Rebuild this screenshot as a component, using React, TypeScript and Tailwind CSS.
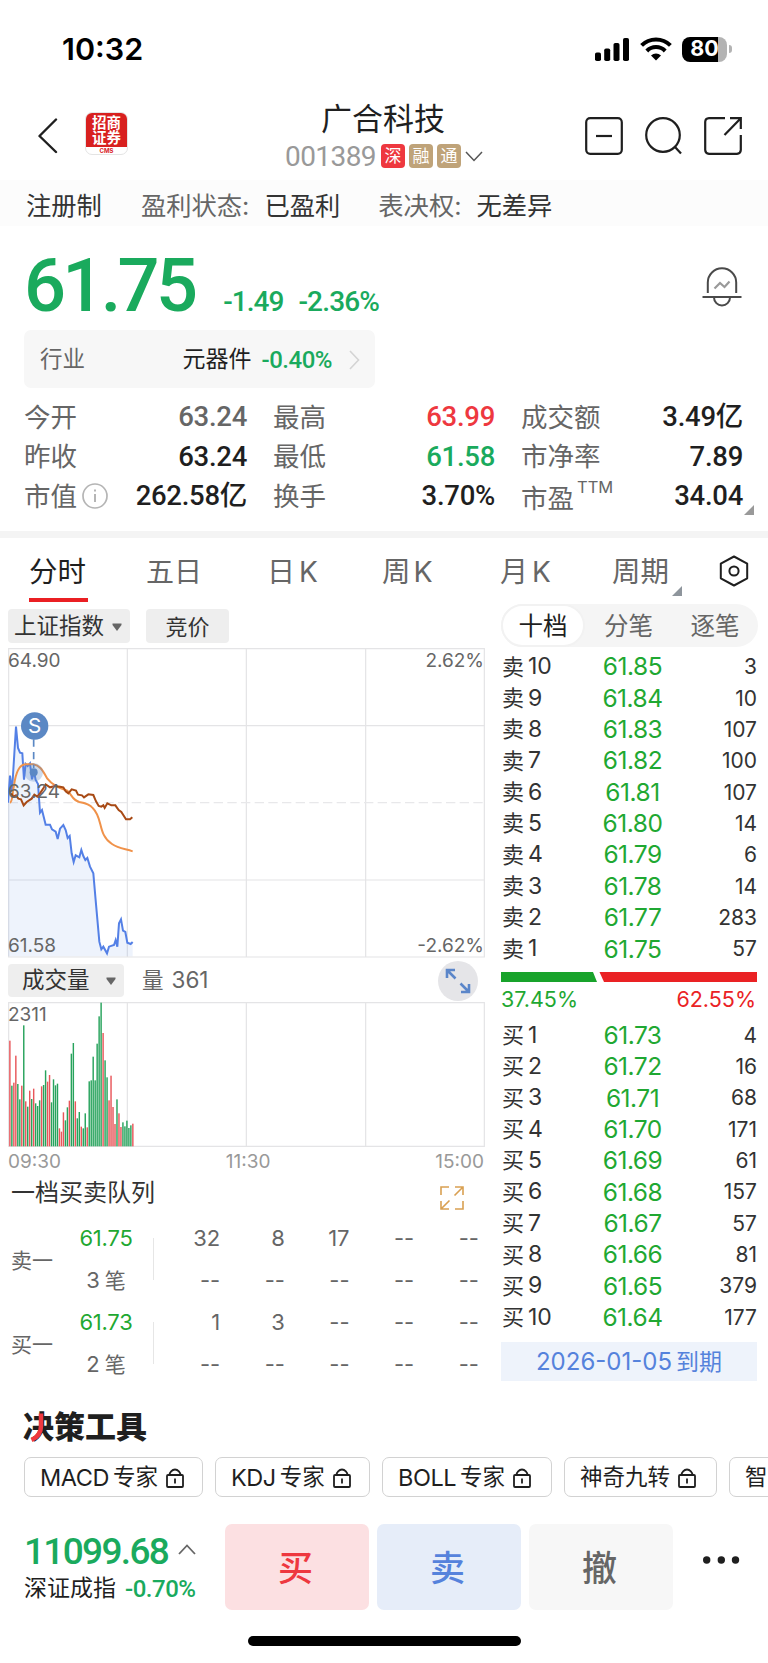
import React from "react";

const DIN = "font-['Roboto','Noto_Sans_CJK_SC',sans-serif]";

interface Level {
  label: string;
  price: string;
  volume: number;
}

const asks: Level[] = [
  { label: "10", price: "61.85", volume: 3 },
  { label: "9", price: "61.84", volume: 10 },
  { label: "8", price: "61.83", volume: 107 },
  { label: "7", price: "61.82", volume: 100 },
  { label: "6", price: "61.81", volume: 107 },
  { label: "5", price: "61.80", volume: 14 },
  { label: "4", price: "61.79", volume: 6 },
  { label: "3", price: "61.78", volume: 14 },
  { label: "2", price: "61.77", volume: 283 },
  { label: "1", price: "61.75", volume: 57 },
];

const bids: Level[] = [
  { label: "1", price: "61.73", volume: 4 },
  { label: "2", price: "61.72", volume: 16 },
  { label: "3", price: "61.71", volume: 68 },
  { label: "4", price: "61.70", volume: 171 },
  { label: "5", price: "61.69", volume: 61 },
  { label: "6", price: "61.68", volume: 157 },
  { label: "7", price: "61.67", volume: 57 },
  { label: "8", price: "61.66", volume: 81 },
  { label: "9", price: "61.65", volume: 379 },
  { label: "10", price: "61.64", volume: 177 },
];

// One entry per minute: bar height, r = up, g = down
const volumeBars =
  "317r 182g 191r 272r 187g 141g 182r 363g 135r 119g 167r 142g 173r 129g 121g 138g 180r 184g 228g 194r 214r 132g 201g 183g 188g 54r 44r 102r 78g 117g 137r 278g 310g 135r 84g 103g 59r 54g 99g 57r 195g 198g 269g 198g 308g 390g 431g 340r 258g 207g 138r 212r 118r 67r 141g 99r 58r 72g 60g 77g 55g 63g 68r"
    .split(" ")
    .map((bar) => ({ height: parseInt(bar, 10), up: bar.endsWith("r") }));

const priceLine =
  "0,464 6,383 12,430 24,236 30,300 36,314 43,316 48,395 53,348 59,354 66,346 72,394 78,371 83,396 90,408 96,494 102,486 113,530 126,530 132,544 143,551 149,573 156,542 166,531 173,546 179,570 185,564 191,616 197,642 203,622 214,628 220,606 226,624 232,636 238,630 246,656 256,676 262,746 274,881 280,904 286,896 297,916 303,896 318,891 323,876 328,896 333,826 339,814 345,848 352,852 358,884 368,888 374,882";

const indexLine =
  "10,436 16,446 24,442 31,452 39,454 47,472 56,462 71,452 79,440 88,446 96,436 106,421 113,409 126,418 141,414 156,416 166,418 173,430 181,436 191,424 204,428 210,440 222,442 228,448 241,439 256,441 264,460 272,474 280,476 286,472 290,480 298,466 310,472 322,472 332,486 340,492 354,514 366,514 373,508";

const StatusBar: React.FC = () => (
  <div className="flex h-[98px] items-center justify-between pl-[62px] pr-[36px] text-black">
    <span className="text-[30.5px] font-semibold leading-none">10:32</span>
    <div className="flex items-center">
      <svg width="34" height="23" viewBox="0 0 34 23">
        <rect x="0" y="14.5" width="6" height="8.5" rx="1.8" />
        <rect x="9.2" y="10.5" width="6" height="12.5" rx="1.8" />
        <rect x="18.5" y="5" width="6" height="18" rx="1.8" />
        <rect x="28" y="0" width="6" height="23" rx="1.8" />
      </svg>
      <svg
        width="32"
        height="24"
        viewBox="0 0 32 24"
        className="ml-[11px]"
        fill="none"
        stroke="#000"
        strokeWidth="4"
      >
        <path d="M1.6 8.4A20.3 20.3 0 0 1 30.4 8.4" />
        <path d="M6.8 14A12.8 12.8 0 0 1 25.2 14" />
        <path d="M16 23.6L11 18.4A7.2 7.2 0 0 1 21 18.4Z" fill="#000" stroke="none" />
      </svg>
      <div className="ml-[10px] flex h-[25px] w-[45px] items-center justify-center rounded-[8px] bg-[linear-gradient(to_right,#000_80%,#b3b3b3_80%)] text-[21.5px] font-bold leading-none text-white">
        80
      </div>
      <div className="ml-[2px] h-[8px] w-[3px] rounded-r-full bg-[#b3b3b3]" />
    </div>
  </div>
);

const Header: React.FC = () => (
  <div className="grid h-[82px] grid-cols-[1fr_auto_1fr] items-start">
    <div className="flex pl-[37px] pt-[14px]">
      <svg
        width="22"
        height="36"
        viewBox="0 0 22 36"
        className="mt-[6px]"
        fill="none"
        stroke="#1f1f1f"
        strokeWidth="2.4"
        strokeLinecap="round"
        strokeLinejoin="round"
      >
        <path d="M19 1.5L2.5 18L19 34" />
      </svg>
      <div className="ml-[26px] flex h-[43px] w-[43px] flex-col overflow-hidden rounded-[7px] border border-[#e4e4e4] bg-white">
        <div className="flex h-[34px] shrink-0 flex-col items-center justify-center bg-[#d8201f] text-[14.5px] font-bold leading-[15.5px] text-white">
          <span className="h-[15.5px]">招商</span>
          <span className="h-[15.5px]">证券</span>
        </div>
        <div className="text-center text-[6px] font-bold leading-[7px] text-[#d8201f]">
          CMS
        </div>
      </div>
    </div>
    <div className="flex flex-col items-center">
      <h1 className="mr-[2px] mt-[3px] text-[31px] leading-[36px] text-[#1f1f1f]">
        广合科技
      </h1>
      <div className="mt-[7px] flex h-[24px] items-center gap-1">
        <span
          className={`${DIN} mr-px mt-px text-[28px] leading-none tracking-[-0.02em] text-[#999]`}
        >
          001389
        </span>
        <Tag text="深" color="bg-[#ee383f]" />
        <Tag text="融" color="bg-[#bfa379]" />
        <Tag text="通" color="bg-[#bfa379]" />
        <svg width="18" height="11" viewBox="0 0 18 11" fill="none" stroke="#555" strokeWidth="1.5">
          <path d="M1 1L9 9.5L17 1" />
        </svg>
      </div>
    </div>
    <div className="flex justify-end gap-[22px] pr-[26px] pt-[19px]">
      <svg width="38" height="38" viewBox="0 0 38 38" fill="none" stroke="#1f1f1f" strokeWidth="2.2">
        <rect x="1.2" y="1.2" width="35.6" height="35.6" rx="4" />
        <path d="M11 19H27" />
      </svg>
      <svg width="37" height="38" viewBox="0 0 37 38" fill="none" stroke="#1f1f1f" strokeWidth="2.2">
        <circle cx="18" cy="18" r="16.8" />
        <path d="M30 30L36 36.5" />
      </svg>
      <svg width="38" height="38" viewBox="0 0 38 38" fill="none" stroke="#1f1f1f" strokeWidth="2.2">
        <path d="M21 1.2H5A4 4 0 0 0 1.2 5V33A4 4 0 0 0 5 36.8H33A4 4 0 0 0 36.8 33V18" />
        <path d="M26 1.2H36.8V12M36.8 1.2L20.5 18" />
      </svg>
    </div>
  </div>
);

const Tag: React.FC<{ text: string; color: string }> = ({ text, color }) => (
  <span
    className={`${color} flex h-[24px] w-[24px] items-center justify-center rounded-[4px] text-[17px] leading-none text-white`}
  >
    {text}
  </span>
);

const Stat: React.FC<{
  label: React.ReactNode;
  value: string;
  color?: string;
}> = ({ label, value, color = "text-[#1f1f1f]" }) => (
  <div className="flex h-[39.5px] items-center justify-between">
    <span className="flex items-center text-[26.5px] leading-none text-[#666]">
      {label}
    </span>
    <span className={`${DIN} ${color} text-[27.5px] font-medium leading-none tracking-[-0.01em]`}>
      {value}
    </span>
  </div>
);

const Quote: React.FC = () => (
  <>
    <div className="flex h-[46px] items-center bg-[#fcfcfc] pl-[26px] pt-[5px] text-[25.3px] leading-none text-[#333]">
      <span>注册制</span>
      <span className="ml-[39px] text-[#666]">盈利状态:</span>
      <span className="ml-[15px]">已盈利</span>
      <span className="ml-[38px] text-[#666]">表决权:</span>
      <span className="ml-[15px]">无差异</span>
    </div>
    <div className="flex h-[104px] justify-between pl-[24px] pr-[26px]">
      <div className={`${DIN} flex items-baseline pt-[23px] text-[#1aaa5d]`}>
        <span className="text-[74px] font-medium leading-none tracking-[-0.05em]">
          61.75
        </span>
        <span className="ml-[29px] text-[28px] font-medium leading-none tracking-[-0.035em]">
          -1.49
        </span>
        <span className="ml-[15px] text-[28px] font-medium leading-none tracking-[-0.03em]">
          -2.36%
        </span>
      </div>
      <svg
        width="40"
        height="42"
        viewBox="0 0 40 42"
        className="mt-[40px]"
        fill="none"
        stroke="#4a4a4a"
        strokeWidth="2"
      >
        <path d="M5.8 27V16.5A14.2 14.2 0 0 1 34.2 16.5V27" />
        <path d="M0.5 31H39.5" />
        <path d="M12 31.5A8 8 0 0 0 28 31.5" />
        <path d="M12.5 22.5L18 17L22.5 21L27.5 15.5" stroke="#999" strokeWidth="2.2" />
      </svg>
    </div>
    <div className="ml-[24px] flex h-[58px] w-[351px] items-center rounded-[7px] bg-[#f7f7f7] pl-[16px] pr-[15px] pt-px">
      <span className="text-[22.5px] leading-none text-[#666]">行业</span>
      <span className="ml-auto text-[23px] leading-none text-[#1f1f1f]">
        元器件
      </span>
      <span
        className={`${DIN} ml-[10px] text-[24px] font-medium leading-none tracking-[-0.02em] text-[#1aaa5d]`}
      >
        -0.40%
      </span>
      <svg width="11" height="20" viewBox="0 0 11 20" className="ml-[17px]" fill="none" stroke="#d4d4d4" strokeWidth="1.6">
        <path d="M1 1L9.5 10L1 19" />
      </svg>
    </div>
    <div className="relative grid h-[143px] grid-cols-[223px_222px_222px] content-start gap-x-[26px] pl-[24px] pt-[9px]">
      <Stat label="今开" value="63.24" color="text-[#666]" />
      <Stat label="最高" value="63.99" color="text-[#ee383f]" />
      <Stat label="成交额" value="3.49亿" />
      <Stat label="昨收" value="63.24" />
      <Stat label="最低" value="61.58" color="text-[#1aaa5d]" />
      <Stat label="市净率" value="7.89" />
      <Stat
        label={
          <>
            市值
            <svg width="26" height="26" viewBox="0 0 26 26" className="ml-[5px]" fill="none" stroke="#b5b5b5" strokeWidth="1.7">
              <circle cx="13" cy="13" r="12" />
              <path d="M13 11V19M13 6.5V8.5" strokeWidth="2" />
            </svg>
          </>
        }
        value="262.58亿"
      />
      <Stat label="换手" value="3.70%" />
      <Stat
        label={
          <>
            <span className="mt-[4px]">市盈</span>
            <span className="mb-[18px] ml-[3px] text-[16.5px] leading-none">TTM</span>
          </>
        }
        value="34.04"
      />
      <svg width="10" height="10" viewBox="0 0 10 10" className="absolute right-[14px] bottom-[16px]">
        <path d="M10 0V10H0Z" fill="#999" />
      </svg>
    </div>
  </>
);

const Tabs: React.FC = () => (
  <div className="flex h-[66px] items-start pl-[29px] pt-[16px] text-[28.5px] leading-[36px] text-[#666]">
    <div className="w-[117px]">
      <span className="text-[#1f1f1f]">分时</span>
      <div className="mt-[8px] h-[4px] w-[59px] bg-[#ea1f23]" />
    </div>
    <span className="w-[121px] text-[28px]">五日</span>
    <span className="w-[115px] text-[28px]">
      日<span className="ml-[4px]">K</span>
    </span>
    <span className="w-[118px]">
      周<span className="ml-[3px]">K</span>
    </span>
    <span className="w-[112px] text-[28px]">
      月<span className="ml-[4px]">K</span>
    </span>
    <span>周期</span>
    <svg width="10" height="10" viewBox="0 0 10 10" className="ml-[3px] mt-[32px]">
      <path d="M10 0V10H0Z" fill="#8e959c" />
    </svg>
    <svg width="30" height="32" viewBox="0 0 30 32" className="ml-[37px] mt-[1px]" fill="none" stroke="#1f1f1f" strokeWidth="2">
      <path d="M15 1.5L28.2 8.7V23.3L15 30.5L1.8 23.3V8.7Z" strokeLinejoin="round" />
      <circle cx="15" cy="16" r="4.6" />
    </svg>
  </div>
);

const Caret: React.FC = () => (
  <svg width="10" height="8" viewBox="0 0 10 8">
    <path d="M0.5 0.5H9.5V2L5 8L0.5 2Z" fill="#666" />
  </svg>
);

const PriceChart: React.FC = () => (
  <div className="relative mt-[5px] h-[310px] text-[19px] leading-none text-[#666]">
    <svg width="477" height="310" viewBox="0 0 1431 930">
      <g fill="none" stroke="#e4e4e6" strokeWidth="3.6">
        <path d="M2 2H1429V927H2Z" />
        <path d="M2 233H1429M2 696H1429M358 2V927M715 2V927M1073 2V927" />
        <path d="M2 464H1429" strokeDasharray="28 13" stroke="#e8e8ea" />
      </g>
      <polygon points={`0,925 ${priceLine} 374,925`} fill="#5b86e5" fillOpacity="0.1" />
      <polyline points={priceLine} fill="none" stroke="#5480e6" strokeWidth="6" />
      <path
        d="M6 464C14 462 12 440 18 412C24 370 36 350 52 349H76C98 352 106 372 118 392C132 410 150 420 178 428C192 440 192 456 214 462C236 466 246 470 254 480C286 510 268 560 312 588C332 602 350 602 374 610"
        fill="none"
        stroke="#f0924a"
        strokeWidth="6"
      />
      <polyline points={indexLine} fill="none" stroke="#a84a15" strokeWidth="6" />
      <path d="M77 274V360" stroke="#5b88c4" strokeWidth="5" strokeDasharray="22 16" />
      <circle cx="77" cy="373" r="28" fill="#5b88c4" fillOpacity="0.3" />
      <circle cx="77" cy="373" r="12" fill="#5b88c4" />
      <circle cx="80" cy="234" r="41" fill="#5b88c4" />
      <text x="80" y="256" textAnchor="middle" fontSize="62" fill="#fff">
        S
      </text>
    </svg>
    <span className="absolute left-0 top-[3px]">64.90</span>
    <span className="absolute left-0 top-[134px]">63.24</span>
    <span className="absolute left-0 top-[288px]">61.58</span>
    <span className="absolute right-[1px] top-[3px]">2.62%</span>
    <span className="absolute right-[1px] top-[288px]">-2.62%</span>
  </div>
);

const VolumeChart: React.FC = () => (
  <div className="relative mt-[5px] h-[146px]">
    <svg width="477" height="146" viewBox="0 0 1431 438">
      <g fill="none" stroke="#e4e4e6" strokeWidth="3.6">
        <path d="M2 2H1429V433H2Z" />
        <path d="M358 2V433M715 2V433M1073 2V433" />
      </g>
      {volumeBars.map((bar, idx) => (
        <rect
          key={idx}
          x={3.5 + idx * 5.95}
          y={433 - bar.height}
          width="4.3"
          height={bar.height}
          fill={bar.up ? "#e8565a" : "#27a35c"}
        />
      ))}
    </svg>
    <span className="absolute left-0 top-[3px] text-[19px] leading-none text-[#666]">
      2311
    </span>
  </div>
);

const QueueRow: React.FC<{ cells: string[] }> = ({ cells }) => (
  <div className="flex h-[42px] items-center">
    {cells.map((cell, idx) => (
      <span key={idx} className="w-[64.7px] text-right">
        {cell}
      </span>
    ))}
  </div>
);

const Queue: React.FC<{
  side: string;
  price: string;
  count: number;
  cells: string[];
}> = ({ side, price, count, cells }) => (
  <div className="flex h-[84px] items-center text-[22px] leading-none text-[#666]">
    <span className="w-[58px] pl-[3px] pt-[2px] text-[21px]">{side}</span>
    <div className="flex w-[80px] flex-col items-center">
      <span className="flex h-[42px] items-center tracking-[-0.01em] text-[#1fa832]">
        {price}
      </span>
      <span className="flex h-[42px] items-center">
        {count}
        <span className="ml-[5px] text-[21px]">笔</span>
      </span>
    </div>
    <div className="ml-[7px] h-[42px] w-px bg-[#e6e6e6]" />
    <div className="ml-[1.5px]">
      <QueueRow cells={cells} />
      <QueueRow cells={["--", "--", "--", "--", "--"]} />
    </div>
  </div>
);

const ChartColumn: React.FC = () => (
  <div className="w-[477px] pt-[5px]">
    <div className="flex gap-4 text-[22.5px] leading-none text-[#333]">
      <div className="flex h-[34px] w-[122px] items-center justify-between rounded-[4px] bg-[#eee] pl-[6px] pr-[8px] pt-px">
        上证指数
        <Caret />
      </div>
      <div className="flex h-[34px] w-[83px] items-center justify-center rounded-[4px] bg-[#eee] pt-px text-[22px]">
        竞价
      </div>
    </div>
    <PriceChart />
    <div className="mt-[6px] flex h-[33px] items-center">
      <div className="flex h-[33px] w-[116px] items-center justify-between rounded-[4px] bg-[#eee] pl-[14px] pr-[8px] text-[22.5px] leading-none text-[#333]">
        成交量
        <Caret />
      </div>
      <span className="ml-[18px] text-[21.5px] leading-none text-[#666]">
        量<span className="ml-[8px] text-[22.5px]">361</span>
      </span>
      <div className="ml-auto mr-[7px] flex h-[40px] w-[40px] items-center justify-center rounded-full bg-[#e5e5e8]">
        <svg width="26" height="26" viewBox="0 0 26 26" fill="none" stroke="#5b86c9" strokeWidth="2.6">
          <path d="M2 10V2H10M2 2L10.5 10.5M24 16V24H16M24 24L15.5 15.5" />
        </svg>
      </div>
    </div>
    <VolumeChart />
    <div className="mt-[2px] flex h-[22px] items-center justify-between pr-px text-[19px] leading-none text-[#999]">
      <span>09:30</span>
      <span>11:30</span>
      <span>15:00</span>
    </div>
    <div className="flex h-[45px] items-center justify-between pl-[3px] pr-[21px]">
      <span className="mb-[3px] text-[24px] leading-none text-[#333]">
        一档买卖队列
      </span>
      <svg width="24" height="24" viewBox="0 0 24 24" className="mt-[6px]" fill="none" stroke="#d9a052" strokeWidth="1.6">
        <path d="M1 9V1H9M15 1H23V9M23 15V23H15M9 23H1V15M14.5 9.5L23 1M1 23L9.5 14.5" />
      </svg>
    </div>
    <Queue side="卖一" price="61.75" count={3} cells={["32", "8", "17", "--", "--"]} />
    <Queue side="买一" price="61.73" count={2} cells={["1", "3", "--", "--", "--"]} />
  </div>
);

const BookRow: React.FC<{ side: string; level: Level }> = ({ side, level }) => (
  <div className="grid h-[31.35px] grid-cols-[84px_92px_1fr] items-center text-[#333]">
    <span className="flex items-center text-[23px] leading-none">
      <span className="mr-[4px] text-[22px]">{side}</span>
      {level.label}
    </span>
    <span className="pl-px text-center text-[24.5px] leading-none tracking-[-0.02em] text-[#1fa832]">
      {level.price}
    </span>
    <span className="text-right text-[21px] leading-none">{level.volume}</span>
  </div>
);

const OrderBook: React.FC = () => (
  <div className="ml-[16px] w-[257px]">
    <div className="flex h-[43px] items-center rounded-full bg-[#f5f5f5] text-[24.5px] leading-none text-[#666]">
      <span className="flex h-[43px] w-[84px] items-center justify-center rounded-full border-2 border-[#f2f2f2] bg-white pt-px text-[#1f1f1f]">
        十档
      </span>
      <span className="w-[87px] pt-px text-center">分笔</span>
      <span className="w-[86px] pt-px text-center">逐笔</span>
    </div>
    <div className="pr-px pl-px pt-[4px]">
      {asks.map((level) => (
        <BookRow key={level.label} side="卖" level={level} />
      ))}
    </div>
    <svg width="256" height="10" viewBox="0 0 256 10" className="mt-[8px]">
      <path d="M0 0H92L96 10H0Z" fill="#18a32b" />
      <path d="M98.5 0H256V10H103Z" fill="#ea2224" />
    </svg>
    <div className="flex h-[34px] items-center justify-between pr-[2px] text-[21.5px] leading-none">
      <span className="text-[#1fa832]">37.45%</span>
      <span className="text-[#ea2224]">62.55%</span>
    </div>
    <div className="pr-px pl-px pt-[3px]">
      {bids.map((level) => (
        <BookRow key={level.label} side="买" level={level} />
      ))}
    </div>
    <div className="mt-[9px] flex h-[39px] w-[256px] items-center justify-center bg-[#eef3fb] pt-[2px] text-[24px] leading-none text-[#5582dc]">
      2026-01-05
      <span className="ml-[4px] text-[23px]">到期</span>
    </div>
  </div>
);

const LockIcon: React.FC = () => (
  <svg width="18" height="20" viewBox="0 0 18 20" fill="none" stroke="#1f1f1f" strokeWidth="1.8">
    <rect x="1" y="7" width="16" height="12" rx="1" />
    <path d="M3.5 7C3.5 4.5 6 1.5 9 1.5S14.5 4.5 14.5 7M9 10.5V15.5" />
  </svg>
);

const Chip: React.FC<{ latin?: string; text: string; width: string }> = ({
  latin,
  text,
  width,
}) => (
  <div
    className={`${width} flex h-[40px] shrink-0 items-center rounded-[7px] border border-[#d2d2d2] pl-[15px] pt-px text-[23px] leading-none text-[#1f1f1f]`}
  >
    {latin && (
      <span className="mr-[4px] text-[23.5px] tracking-[-0.02em]">{latin}</span>
    )}
    <span className="mr-[8px] shrink-0 text-[22.5px]">{text}</span>
    <LockIcon />
  </div>
);

const Tools: React.FC = () => (
  <div className="h-[129px] overflow-hidden pl-[23px] pt-[16px]">
    <div className="relative h-[32px] w-[130px]">
      <h2 className="text-[31px] font-black leading-[32px] text-[#1f1f1f]">
        决策工具
      </h2>
      <svg width="24" height="32" viewBox="0 0 24 32" className="absolute left-[5px] top-0" fill="none" stroke="#ee383f" strokeWidth="4.5">
        <path d="M13 2.5V15C13 22 9.500 26.500 3.500 29" />
      </svg>
    </div>
    <div className="ml-px mt-[14px] flex gap-[12px]">
      <Chip latin="MACD" text="专家" width="w-[179px]" />
      <Chip latin="KDJ" text="专家" width="w-[155px]" />
      <Chip latin="BOLL" text="专家" width="w-[170px]" />
      <Chip text="神奇九转" width="w-[153px]" />
      <Chip text="智能诊股" width="w-[153px]" />
    </div>
  </div>
);

const Footer: React.FC = () => (
  <>
    <div className="flex h-[86px] pl-[24px]">
      <div className="w-[201px] pt-[8px]">
        <div className={`${DIN} flex h-[38px] items-center text-[#1aaa5d]`}>
          <span className="text-[37px] font-medium leading-none tracking-[-0.045em]">
            11099.68
          </span>
          <svg width="18" height="11" viewBox="0 0 18 11" className="mb-[4px] ml-[10px]" fill="none" stroke="#666" strokeWidth="1.8">
            <path d="M1 10L9 1.5L17 10" />
          </svg>
        </div>
        <div className="flex h-[36px] items-center pt-px text-[23px] leading-none text-[#1f1f1f]">
          深证成指
          <span
            className={`${DIN} ml-[9px] text-[24px] font-medium tracking-[-0.02em] text-[#1aaa5d]`}
          >
            -0.70%
          </span>
        </div>
      </div>
      <div className="flex gap-2 text-[35px] font-medium leading-none">
        <button className="w-[144px] rounded-[7px] bg-[#fce0e2] pr-[3px] pt-[3px] text-[#ee383f]">
          买
        </button>
        <button className="w-[144px] rounded-[7px] bg-[#e6edf9] pr-[3px] pt-[3px] text-[#5582dc]">
          卖
        </button>
        <button className="w-[144px] rounded-[7px] bg-[#f7f7f7] pr-[3px] pt-[3px] text-[#666]">
          撤
        </button>
      </div>
      <svg width="38" height="8" viewBox="0 0 38 8" className="ml-[30px] mt-[32px]" fill="#1f1f1f">
        <circle cx="3.7" cy="4" r="3.7" />
        <circle cx="18.3" cy="4" r="3.7" />
        <circle cx="32.5" cy="4" r="3.7" />
      </svg>
    </div>
    <div className="mt-[26px] ml-[248px] h-[10px] w-[273px] rounded-full bg-black" />
  </>
);

export default function App() {
  return (
    <div className="h-[1663px] w-[768px] overflow-hidden bg-white font-['Inter','Noto_Sans_CJK_SC',sans-serif]">
      <StatusBar />
      <Header />
      <Quote />
      <div className="h-[7px] bg-[#f4f4f4]" />
      <Tabs />
      <div className="flex h-[791px] pl-[8px]">
        <ChartColumn />
        <OrderBook />
      </div>
      <Tools />
      <Footer />
    </div>
  );
}
